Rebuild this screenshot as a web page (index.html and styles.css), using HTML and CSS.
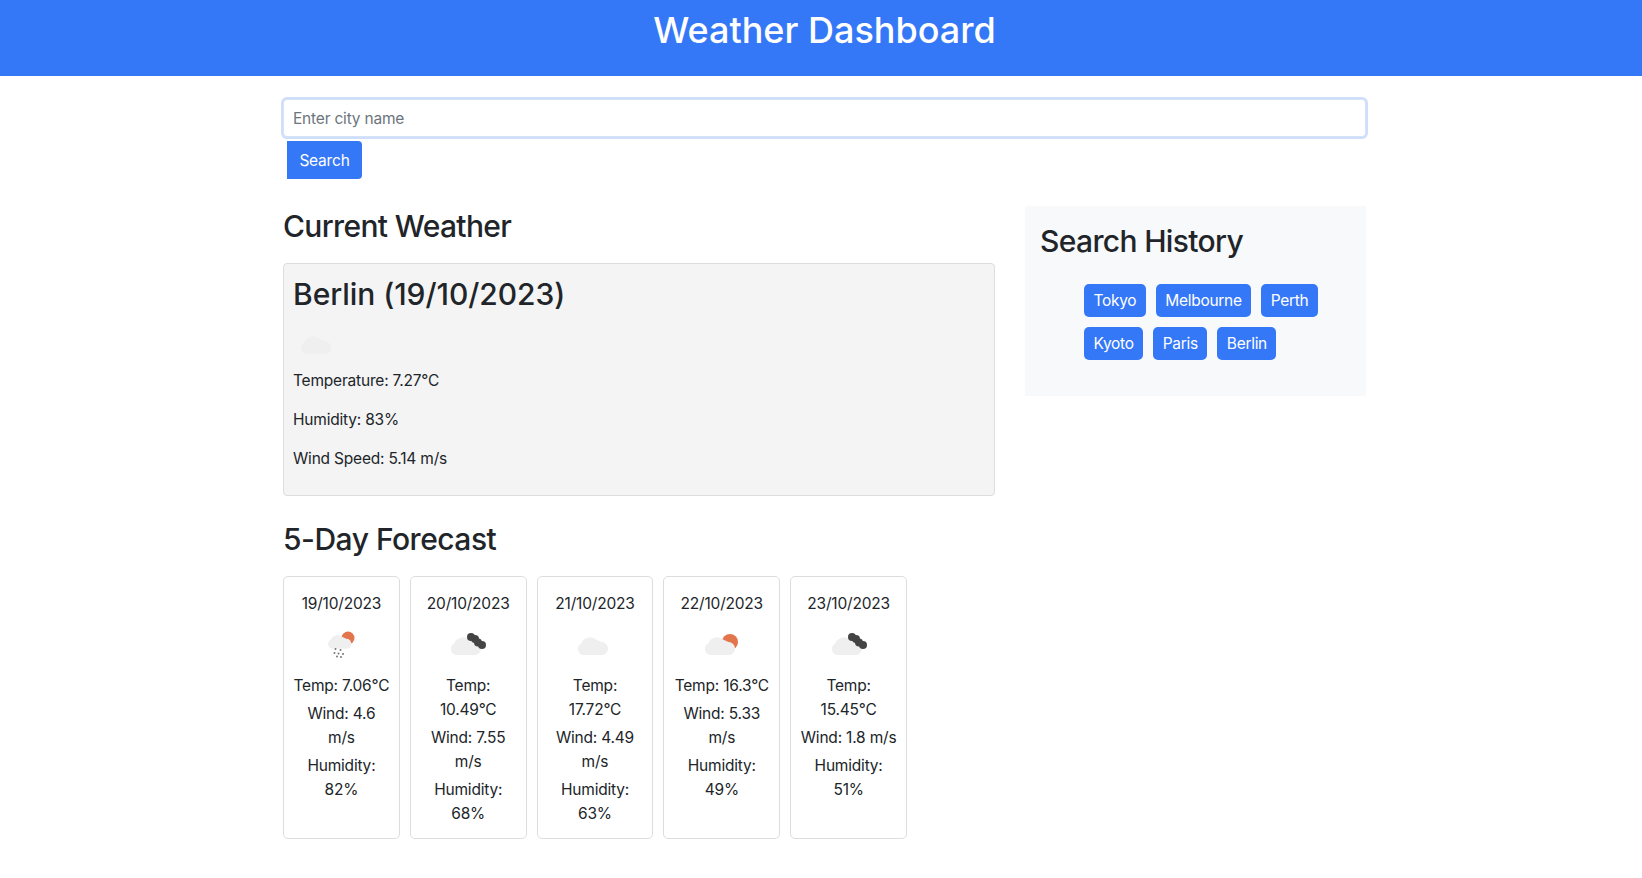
FILE: index.html
```html
<!DOCTYPE html>
<html lang="en">
  <head>
    <meta charset="UTF-8" />
    <title>Weather Dashboard</title>
    <link rel="stylesheet" href="styles.css">
  </head>
  <body>
    <svg class="icon-defs" width="0" height="0">
      <defs>
        <path id="cloud" d="M14 36a6 6 0 0 1-3-11.200A9.500 9.500 0 0 1 26 20.500L31.500 23A6.600 6.600 0 0 1 33 36z" />
        <g id="dark-clouds">
          <circle cx="28" cy="18" r="4" />
          <circle cx="32" cy="20" r="4" />
          <circle cx="35" cy="23.500" r="4" />
          <circle cx="39" cy="26" r="4" />
        </g>
      </defs>
    </svg>

    <header class="top-bar">
      <h1>Weather Dashboard</h1>
    </header>

    <main class="container">
      <form class="search-form">
        <input class="city-input" placeholder="Enter city name" />
        <button class="search-btn" type="button">Search</button>
      </form>

      <div class="columns">
        <div class="main-col">
          <h2>Current Weather</h2>
          <section class="current-card">
            <h2>Berlin (19/10/2023)</h2>
            <svg class="current-icon" viewBox="0 0 50 48">
              <use href="#cloud" class="cloud" y="-3" />
            </svg>
            <p>Temperature: 7.27°C</p>
            <p>Humidity: 83%</p>
            <p>Wind Speed: 5.14 m/s</p>
          </section>

          <h2 class="forecast-title">5-Day Forecast</h2>
          <div class="forecast">
            <div class="day-card">
              <p>19/10/2023</p>
              <svg class="day-icon" viewBox="0 0 50 50">
                <circle class="sun" cx="32" cy="19" r="6.500" />
                <g transform="translate(6 2) scale(.77)">
                  <use href="#cloud" class="cloud" />
                </g>
                <g class="drops">
                  <circle cx="19.500" cy="30" r="1" />
                  <circle cx="24.500" cy="31" r="1" />
                  <circle cx="18.500" cy="34" r="1" />
                  <circle cx="22.500" cy="34.500" r="1" />
                  <circle cx="27" cy="35" r="1" />
                  <circle cx="21" cy="37.500" r="1" />
                  <circle cx="25" cy="38" r="1" />
                </g>
              </svg>
              <p>Temp: 7.06°C</p>
              <p>Wind: 4.6<br />m/s</p>
              <p>Humidity:<br />82%</p>
            </div>
            <div class="day-card">
              <p>20/10/2023</p>
              <svg class="day-icon" viewBox="0 0 50 50">
                <use href="#cloud" class="cloud" />
                <use href="#dark-clouds" class="dark" />
              </svg>
              <p>Temp:<br />10.49°C</p>
              <p>Wind: 7.55<br />m/s</p>
              <p>Humidity:<br />68%</p>
            </div>
            <div class="day-card">
              <p>21/10/2023</p>
              <svg class="day-icon" viewBox="0 0 50 50">
                <use href="#cloud" class="cloud" />
              </svg>
              <p>Temp:<br />17.72°C</p>
              <p>Wind: 4.49<br />m/s</p>
              <p>Humidity:<br />63%</p>
            </div>
            <div class="day-card">
              <p>22/10/2023</p>
              <svg class="day-icon" viewBox="0 0 50 50">
                <circle class="sun" cx="33" cy="23" r="8" />
                <use href="#cloud" class="cloud" />
              </svg>
              <p>Temp: 16.3°C</p>
              <p>Wind: 5.33<br />m/s</p>
              <p>Humidity:<br />49%</p>
            </div>
            <div class="day-card">
              <p>23/10/2023</p>
              <svg class="day-icon" viewBox="0 0 50 50">
                <use href="#cloud" class="cloud" />
                <use href="#dark-clouds" class="dark" />
              </svg>
              <p>Temp:<br />15.45°C</p>
              <p>Wind: 1.8 m/s</p>
              <p>Humidity:<br />51%</p>
            </div>
          </div>
        </div>

        <aside class="history">
          <h2>Search History</h2>
          <ul class="history-list">
            <li><button type="button">Tokyo</button></li>
            <li><button type="button">Melbourne</button></li>
            <li><button type="button">Perth</button></li>
            <li><button type="button">Kyoto</button></li>
            <li><button type="button">Paris</button></li>
            <li><button type="button">Berlin</button></li>
          </ul>
        </aside>
      </div>
    </main>
  </body>
</html>
```

FILE: styles.css
```css
body {
  margin: 0;
  font-family: Inter, "Liberation Sans", sans-serif;
  font-size: 15.5px;
  letter-spacing: -0.2px;
  line-height: 24px;
  color: #212529;
  background-color: #fff;
}
.icon-defs {
  display: block;
}
.top-bar {
  height: 76px;
  padding-left: 7px;
  background-color: #3578f7;
  color: #fff;
  text-align: center;
}
h1 {
  margin: 0;
  padding-top: 7px;
  font-size: 36px;
  font-weight: 500;
  letter-spacing: normal;
  line-height: 46px;
}
h2 {
  margin: 0 0 8px;
  font-size: 30px;
  font-weight: 500;
  letter-spacing: -0.65px;
  line-height: 38px;
}
.forecast-title {
  letter-spacing: -0.5px;
}
p {
  margin: 0;
}
.container {
  width: 1084px;
  margin-left: 283px;
}
.search-form {
  padding-top: 23px;
}
.city-input {
  display: block;
  box-sizing: border-box;
  width: 1083px;
  height: 38px;
  padding: 6px 9px;
  font: inherit;
  letter-spacing: inherit;
  color: #212529;
  border: 1px solid #d6e2f8;
  border-radius: 4px;
  box-shadow: 0 0 0 2px #cfdffb;
  outline: none;
}
.city-input::placeholder {
  color: #6c757d;
}
.search-btn {
  display: block;
  width: 75px;
  height: 38px;
  margin: 4px 0 0 4px;
  padding: 1px 0 0;
  font: inherit;
  letter-spacing: inherit;
  color: #fff;
  background-color: #3578f7;
  border: none;
  border-radius: 0 4px 4px 0;
}
.columns {
  display: flex;
  gap: 30px;
  margin-top: 27px;
}
.main-col {
  width: 712px;
  padding-top: 1px;
}
.current-card {
  box-sizing: border-box;
  height: 233px;
  margin: 18px 0 24px;
  padding: 11px 10px 10px 9px;
  background-color: #f4f4f4;
  border: 1px solid #ddd;
  border-radius: 4px;
}
.current-card h2 {
  letter-spacing: -0.05px;
}
.current-card p {
  margin-bottom: 15px;
}
.current-icon {
  display: block;
  width: 50px;
  height: 48px;
}
.forecast {
  display: flex;
  gap: 10px;
  margin-top: 18px;
}
.day-card {
  box-sizing: border-box;
  width: 116.800px;
  padding: 11px 8px 8px;
  border: 1px solid #ddd;
  border-radius: 5px;
  text-align: center;
  white-space: nowrap;
}
.day-card p {
  margin: 4px 0;
}
.day-icon {
  display: block;
  width: 50px;
  height: 50px;
  margin: -1px auto 5px;
}
.cloud {
  fill: #efefef;
}
.dark {
  fill: #444;
}
.sun {
  fill: #e2754c;
}
.drops {
  fill: #777;
}
.history {
  box-sizing: border-box;
  width: 341px;
  height: 190px;
  padding: 16px 15px 15px;
  background-color: #f8f9fa;
}
.history h2 {
  margin-bottom: 24px;
}
.history-list {
  display: flex;
  flex-wrap: wrap;
  gap: 10px;
  margin: 0;
  padding: 0 20px 0 44px;
  list-style: none;
}
.history-list button {
  display: block;
  height: 33px;
  padding: 0 9.500px;
  font: inherit;
  letter-spacing: -0.3px;
  color: #fff;
  background-color: #3578f7;
  border: none;
  border-radius: 5px;
}
```
